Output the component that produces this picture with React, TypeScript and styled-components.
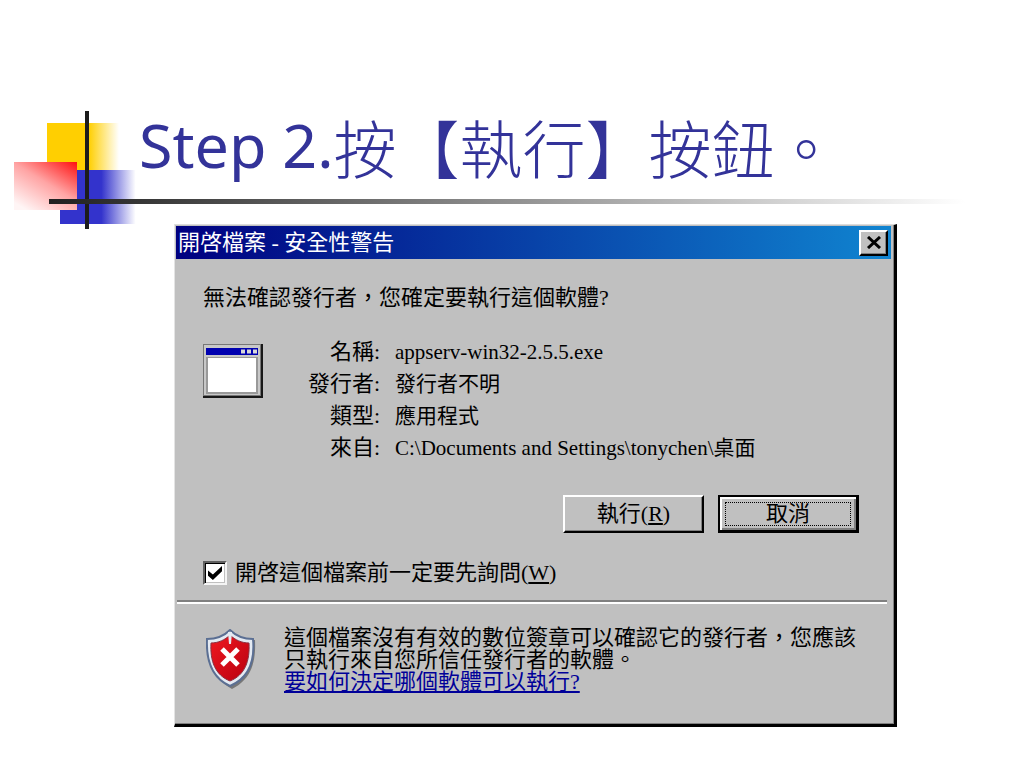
import React from "react";
import styled, { createGlobalStyle } from "styled-components";

const GlobalStyle = createGlobalStyle`
  * { box-sizing: border-box; }
  body { margin: 0; background: #fff; }
`;

const Slide = styled.main`
  padding: 110px 0 40px;
`;

const Header = styled.header`
  display: grid;
  grid-template-columns: 125px 1fr;
  grid-template-rows: 89px 5px;
  height: 114px;
  padding: 0 59px 0 14px;
`;

const Ornament = styled.svg`
  grid-area: 1 / 1 / 3 / 2;
  display: block;
  width: 125px;
  height: 120px;
`;

const Title = styled.h1`
  grid-area: 1 / 2 / 2 / 3;
  display: flex;
  align-items: flex-start;
  margin: 0;
  color: #333399;
  font-family: "Noto Sans", sans-serif;
  font-size: 61px;
  font-weight: 400;
  line-height: 70px;
  white-space: nowrap;
`;

const TitleHan = styled.span`
  font-family: "Noto Sans CJK TC", sans-serif;
  font-size: 63px;
  font-weight: 300;
  line-height: 72px;
`;

const Rule = styled.div`
  grid-area: 2 / 1 / 3 / 3;
  margin-left: 35px;
  background: linear-gradient(90deg, #202020, #fff);
`;

const Dialog = styled.section`
  margin: 0 127px 0 174px;
  padding: 1px 3px 0 1px;
  background: #c0c0c0;
  border: solid;
  border-width: 1px 3px 3px 1px;
  border-color: #dcdcdc #000 #000 #e4e4e4;
  box-shadow: inset -1px -1px #808080;
  color: #000;
  font-family: "Liberation Serif", "Noto Sans CJK TC", serif;
  font-size: 22px;
  line-height: 32px;
`;

const TitleBar = styled.div`
  display: flex;
  align-items: center;
  justify-content: space-between;
  height: 33px;
  padding: 0 3px 0 2px;
  background: linear-gradient(90deg, #000080, #1084d0);
`;

const DialogTitle = styled.h2`
  margin: 0;
  color: #fff;
  font-size: 22px;
  font-weight: 400;
  line-height: 30px;
`;

const CloseButton = styled.button`
  display: flex;
  align-items: center;
  justify-content: center;
  width: 29px;
  height: 26px;
  padding: 0;
  background: #c0c0c0;
  border: 2px solid;
  border-color: #fff #000 #000 #fff;
  box-shadow: inset -1px -1px #808080;
`;

const Body = styled.div`
  padding: 23px 32px 11px 27px;
`;

const Prompt = styled.p`
  margin: 0 0 22px;
`;

const FileInfo = styled.div`
  display: flex;
  gap: 43px;
`;

const WindowIcon = styled.svg`
  flex: none;
  width: 60px;
  height: 54px;
  margin-top: 8px;
`;

const Facts = styled.dl`
  display: grid;
  grid-template-columns: 74px 1fr;
  column-gap: 15px;
  flex: 1;
  margin: 0;
  white-space: nowrap;
`;

const Term = styled.dt`
  text-align: right;
`;

const Value = styled.dd`
  margin: 0;
  font-size: 21px;
`;

const Actions = styled.div`
  display: flex;
  justify-content: flex-end;
  gap: 14px;
  margin-top: 31px;
`;

const PushButton = styled.button<{ $default?: boolean }>`
  width: 141px;
  height: 38px;
  padding: ${(p) => (p.$default ? "3px" : "0")};
  background: #c0c0c0;
  border: solid;
  border-width: ${(p) => (p.$default ? "2px 3px 3px 2px" : "2px")};
  border-color: ${(p) => (p.$default ? "#000" : "#fff #000 #000 #fff")};
  box-shadow: ${(p) =>
    p.$default ? "inset 2px 2px #fff, inset -2px -2px #808080" : "inset -1px -1px #808080"};
  color: #000;
  font: inherit;
  line-height: 30px;
`;

const FocusFrame = styled.span`
  display: block;
  height: 24px;
  margin: 0 2px;
  border: 1px dotted #000;
  line-height: 22px;
`;

const AskRow = styled.label`
  display: flex;
  align-items: center;
  gap: 8px;
  margin-top: 24px;
`;

const Checkbox = styled.input`
  appearance: none;
  flex: none;
  width: 24px;
  height: 24px;
  margin: 0;
  background: #fff;
  border: 2px solid;
  border-color: #606060 #f4f4f4 #f4f4f4 #606060;
  box-shadow: inset 1px 1px #000, inset -1px -1px #c0c0c0;

  &:checked::before {
    content: "";
    display: block;
    width: 14px;
    height: 14px;
    margin: 3px;
    background: #000;
    clip-path: polygon(0 32%, 35% 60%, 100% 0, 100% 38%, 35% 100%, 0 70%);
  }
`;

const Divider = styled.hr`
  height: 4px;
  margin: 0 4px 0 1px;
  border: solid;
  border-width: 2px 0;
  border-color: #808080 transparent #fff;
`;

const Warning = styled.div`
  display: flex;
  gap: 28px;
  padding: 23px 24px 31px 30px;
`;

const ShieldIcon = styled.svg`
  flex: none;
  width: 50px;
  height: 60px;
  margin-top: 2px;
`;

const WarningText = styled.p`
  margin: 0;
  line-height: 22px;
  white-space: nowrap;
`;

const HelpLink = styled.a`
  color: #000099;
  text-decoration: underline;
  text-underline-offset: 2px;
`;

const facts = [
  ["名稱:", "appserv-win32-2.5.5.exe"],
  ["發行者:", "發行者不明"],
  ["類型:", "應用程式"],
  ["來自:", "C:\\Documents and Settings\\tonychen\\桌面"],
];

export default function App() {
  return (
    <Slide lang="zh-Hant">
      <GlobalStyle />
      <Header>
        <Ornament viewBox="0 0 125 120" aria-hidden="true">
          <defs>
            <linearGradient id="gold">
              <stop offset="0.58" stopColor="#ffcf01" />
              <stop offset="1" stopColor="#fff" />
            </linearGradient>
            <linearGradient id="blue">
              <stop offset="0.53" stopColor="#3333cc" />
              <stop offset="0.97" stopColor="#fff" />
            </linearGradient>
            <linearGradient id="red" x1="1" y1="0" x2="0.2" y2="1">
              <stop offset="0" stopColor="#ff1010" />
              <stop offset="0.5" stopColor="#ffa4a4" />
              <stop offset="1" stopColor="#fff5f5" />
            </linearGradient>
          </defs>
          <rect x="33" y="13" width="72" height="47" fill="url(#gold)" />
          <rect x="46" y="60" width="78" height="54" fill="url(#blue)" />
          <rect x="0" y="52" width="63" height="48" fill="url(#red)" />
          <rect x="71" y="1" width="4" height="118" fill="#1c1c1c" />
        </Ornament>
        <Title>
          <span>Step 2.</span>
          <TitleHan>按【執行】按鈕。</TitleHan>
        </Title>
        <Rule />
      </Header>

      <Dialog aria-labelledby="dialog-title">
        <TitleBar>
          <DialogTitle id="dialog-title">開啓檔案 - 安全性警告</DialogTitle>
          <CloseButton type="button" aria-label="關閉">
            <svg width="16" height="13" viewBox="0 0 16 13" aria-hidden="true">
              <path d="M2 1 14 12M14 1 2 12" stroke="#000" strokeWidth="3" />
            </svg>
          </CloseButton>
        </TitleBar>

        <Body>
          <Prompt>無法確認發行者，您確定要執行這個軟體?</Prompt>
          <FileInfo>
            <WindowIcon viewBox="0 0 60 54" aria-hidden="true">
              <rect width="60" height="54" fill="#181818" />
              <rect width="58" height="52" fill="#777" />
              <rect x="1" y="1" width="56" height="50" fill="#c8c8c8" />
              <rect x="3" y="4" width="52" height="7" fill="#0000b0" />
              <path d="M38 7.500h4m2 0h4m2 0h4" stroke="#d8d8d8" strokeWidth="4" />
              <rect x="3" y="13" width="52" height="37" fill="#999" />
              <rect x="5" y="14" width="48" height="34" fill="#fff" />
            </WindowIcon>
            <Facts>
              {facts.map(([term, value]) => (
                <React.Fragment key={term}>
                  <Term>{term}</Term>
                  <Value>{value}</Value>
                </React.Fragment>
              ))}
            </Facts>
          </FileInfo>
          <Actions>
            <PushButton type="button">
              執行(<u>R</u>)
            </PushButton>
            <PushButton type="button" $default>
              <FocusFrame>取消</FocusFrame>
            </PushButton>
          </Actions>
          <AskRow>
            <Checkbox type="checkbox" defaultChecked />
            <span>
              開啓這個檔案前一定要先詢問(<u>W</u>)
            </span>
          </AskRow>
        </Body>

        <Divider />

        <Warning>
          <ShieldIcon viewBox="0 0 50 60" aria-hidden="true">
            <defs>
              <linearGradient id="shield" x1="0" y1="0" x2="1" y2="1">
                <stop offset="0" stopColor="#f01820" />
                <stop offset="1" stopColor="#b80010" />
              </linearGradient>
            </defs>
            <path
              d="M26 3C31 8 40 11 49 11C50 32 46 50 26 60C8 50 3 34 4 13C12 13 20 9 26 3Z"
              fill="#777"
            />
            <path
              d="M24 1C30 7 38 10 47 10C49 31 43 49 24 57C6 49 0 31 1 10C10 10 18 7 24 1Z"
              fill="#e4eaf2"
              stroke="#5b6f93"
              strokeWidth="2"
            />
            <path
              d="M24 6C29 11 36 14 43 14C44 32 39 46 24 52C9 46 4 32 5 14C12 14 19 11 24 6Z"
              fill="url(#shield)"
              stroke="#8a3040"
            />
            <path d="M22 3h4l-1 12h-2Z" fill="#e4eaf2" />
            <path d="M16 20 32 36M32 20 16 36" stroke="#fff" strokeWidth="5" />
          </ShieldIcon>
          <WarningText>
            這個檔案沒有有效的數位簽章可以確認它的發行者，您應該
            <br />
            只執行來自您所信任發行者的軟體。
            <br />
            <HelpLink href="#help">要如何決定哪個軟體可以執行?</HelpLink>
          </WarningText>
        </Warning>
      </Dialog>
    </Slide>
  );
}
